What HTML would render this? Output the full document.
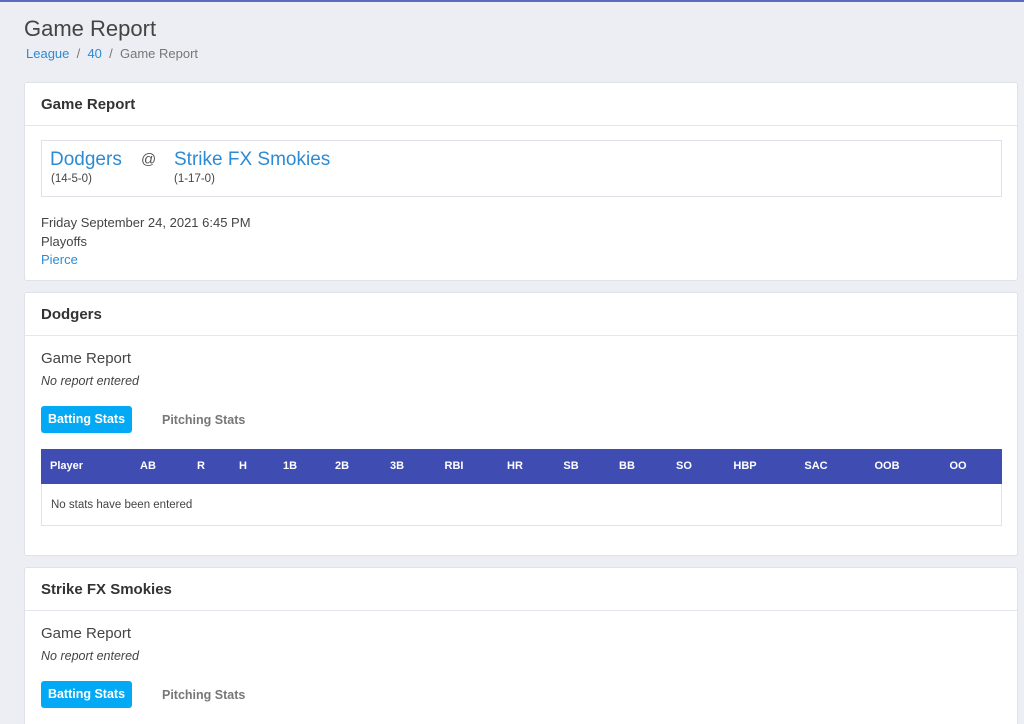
<!DOCTYPE html>
<html><head><meta charset="utf-8"><style>
*{box-sizing:border-box;margin:0;padding:0}
html,body{width:1024px;height:724px;overflow:hidden}
body{background:#eceef3;font-family:"Liberation Sans",sans-serif;color:#333;position:relative}
.a{position:absolute;white-space:nowrap}
.card{position:absolute;left:24px;width:994px;background:#fff;border:1px solid #dfe2e8;border-radius:3px}
.hd{position:absolute;left:0;right:0;top:0;height:43px;border-bottom:1px solid #e4e7ec}
.hd span{position:absolute;left:16px;top:13px;font-size:15px;font-weight:bold;color:#333}
.blue{color:#2d8bd3}
.btn{position:absolute;left:16px;width:91px;height:27px;background:#03a9f4;color:#fff;border-radius:3px;font-size:12.5px;font-weight:bold;text-align:center;line-height:26px}
.btn2{position:absolute;left:137px;font-size:12.5px;font-weight:bold;color:#777}
.th{position:absolute;left:16px;width:961px;height:35px;background:#3f4db3;color:#fff;font-size:11px;font-weight:bold}
.th span{position:absolute;top:11px;transform:translateX(-50%)}
.tr{position:absolute;left:16px;width:961px;height:42px;border:1px solid #e0e3e8;border-top:none;font-size:11.5px;color:#444;padding:15px 0 0 9px}
</style></head><body>
<div class="a" style="left:0;top:0;width:1024px;height:2px;background:#5c6bc0"></div>
<div class="a" style="left:24px;top:16px;font-size:22px;color:#444">Game Report</div>
<div class="a" style="left:26px;top:46px;font-size:13px;color:#777"><span class="blue">League</span> &nbsp;/&nbsp; <span class="blue">40</span> &nbsp;/&nbsp; Game Report</div>

<div class="card" style="top:82px;height:199px">
<div class="hd"><span>Game Report</span></div>
<div class="a" style="left:16px;top:57px;width:961px;height:57px;border:1px solid #dfe2e8"></div>
<div class="a blue" style="left:25px;top:66px;font-size:19px">Dodgers</div>
<div class="a" style="left:116px;top:68px;font-size:15px;color:#555">@</div>
<div class="a blue" style="left:149px;top:66px;font-size:19px">Strike FX Smokies</div>
<div class="a" style="left:26px;top:90px;font-size:11.5px;color:#444">(14-5-0)</div>
<div class="a" style="left:149px;top:90px;font-size:11.5px;color:#444">(1-17-0)</div>
<div class="a" style="left:16px;top:132px;font-size:13px;color:#444">Friday September 24, 2021 6:45 PM</div>
<div class="a" style="left:16px;top:151px;font-size:13px;color:#444">Playoffs</div>
<div class="a blue" style="left:16px;top:169px;font-size:13px">Pierce</div>
</div>

<div class="card" style="top:292px;height:264px">
<div class="hd"><span>Dodgers</span></div>
<div class="a" style="left:16px;top:57px;font-size:15px;color:#444">Game Report</div>
<div class="a" style="left:16px;top:81px;font-size:12.5px;font-style:italic;color:#444">No report entered</div>
<div class="btn" style="top:113px">Batting Stats</div>
<div class="btn2 a" style="top:120px">Pitching Stats</div>
<div class="th" style="top:156px"><span style="left:9px;transform:none">Player</span><span style="left:107px">AB</span><span style="left:160px">R</span><span style="left:202px">H</span><span style="left:249px">1B</span><span style="left:301px">2B</span><span style="left:356px">3B</span><span style="left:413px">RBI</span><span style="left:474px">HR</span><span style="left:530px">SB</span><span style="left:586px">BB</span><span style="left:643px">SO</span><span style="left:704px">HBP</span><span style="left:775px">SAC</span><span style="left:846px">OOB</span><span style="left:917px">OO</span></div>
<div class="tr" style="top:191px">No stats have been entered</div>
</div>

<div class="card" style="top:567px;height:170px">
<div class="hd"><span>Strike FX Smokies</span></div>
<div class="a" style="left:16px;top:57px;font-size:15px;color:#444">Game Report</div>
<div class="a" style="left:16px;top:81px;font-size:12.5px;font-style:italic;color:#444">No report entered</div>
<div class="btn" style="top:113px">Batting Stats</div>
<div class="btn2 a" style="top:120px">Pitching Stats</div>
</div>
</body></html>
